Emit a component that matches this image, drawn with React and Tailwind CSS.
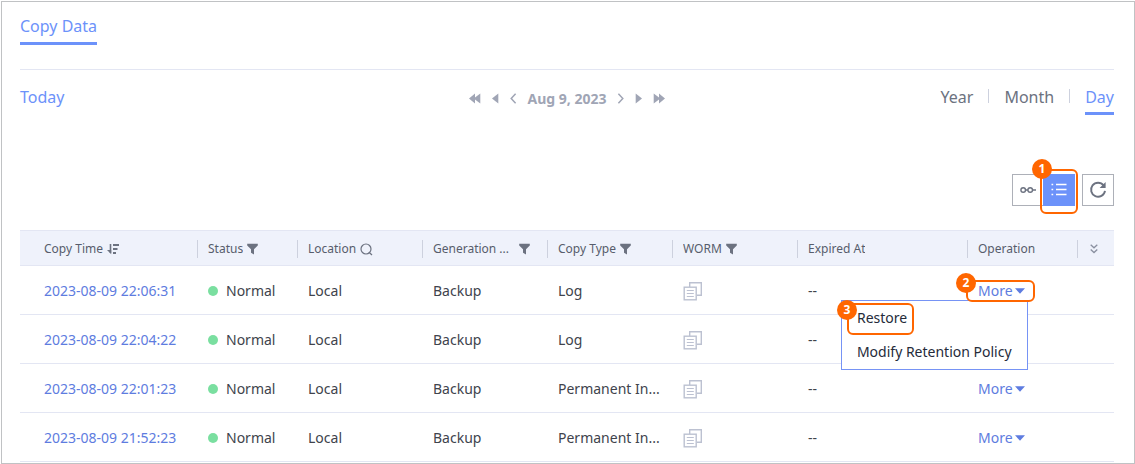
import React from "react";

const rows = [
  { time: "2023-08-09 22:06:31", type: "Log", actions: true, open: true },
  { time: "2023-08-09 22:04:22", type: "Log" },
  { time: "2023-08-09 22:01:23", type: "Permanent In...", actions: true },
  { time: "2023-08-09 21:52:23", type: "Permanent In...", actions: true },
];

function Filter() {
  return (
    <svg width="11" height="12" viewBox="0 0 11 12" className="shrink-0 fill-[#6c7280]" aria-hidden="true">
      <path d="M0.2 0.8H10.8V2.6L7 6.2V11.6L4 9.8V6.2L0.2 2.6Z" />
    </svg>
  );
}

function Sort() {
  return (
    <svg width="12" height="12" viewBox="0 0 12 12" className="shrink-0" fill="none" stroke="#6c7280" aria-hidden="true">
      <path d="M3.5 1V10" strokeWidth="1.6" />
      <path d="M0 7H4.2V11.2Z" fill="#6c7280" stroke="none" />
      <path d="M6 2H12M6 6H10.5M6 10H9" strokeWidth="1.9" />
    </svg>
  );
}

function Search() {
  return (
    <svg width="13" height="13" viewBox="0 0 13 13" className="shrink-0" fill="none" stroke="#6c7280" strokeWidth="1.2" aria-hidden="true">
      <circle cx="6" cy="6" r="5" />
      <path d="M9 9.2L12 12" />
    </svg>
  );
}

function Worm() {
  return (
    <svg width="20" height="20" viewBox="0 0 20 20" fill="none" stroke="#bcc1d1" role="img" aria-label="WORM">
      <path d="M6.7 6V1.7H18.3V14.3H14" strokeWidth="1.4" />
      <rect x="1.2" y="6.2" width="12" height="12.6" strokeWidth="1.4" />
      <path d="M3.8 9.5H10.8M3.8 12.5H10.8M3.8 15.5H10.8" strokeWidth="1.1" />
    </svg>
  );
}

function NavIcon({ kind, flip, label }) {
  const width = kind === "double" ? 12 : 7;
  return (
    <button type="button" aria-label={label} className="block">
      <svg
        width={width}
        height="11"
        viewBox={`0 0 ${width} 11`}
        fill="#a0a5b5"
        className={flip ? "rotate-180" : ""}
        aria-hidden="true"
      >
        {kind === "double" && <path d="M0 5.5L6 0.5V4.6L11.3 0.5V10.5L6 6.4V10.5Z" />}
        {kind === "single" && <path d="M0 5.5L6.3 0.5V10.5Z" />}
        {kind === "chevron" && <path d="M5.6 0.8L1.2 5.5L5.6 10.2" fill="none" stroke="#a0a5b5" strokeWidth="1.5" />}
      </svg>
    </button>
  );
}

function Badge({ children }) {
  return (
    <span className="flex size-5 items-center justify-center rounded-full bg-[#ff6600] text-[12px] leading-5 font-bold text-white">
      {children}
    </span>
  );
}

function Heading({ label, icon, first, spread }) {
  return (
    <th scope="col" className="p-0 text-left font-normal">
      <div
        className={`flex h-[18px] items-center gap-1 ${first ? "pl-6" : "border-l border-[#cdd1de] pl-[10px]"} ${
          spread ? "justify-between pr-[17px]" : ""
        }`}
      >
        <span className="truncate">{label}</span>
        {icon}
      </div>
    </th>
  );
}

function More({ open }) {
  return (
    <div className="relative w-fit">
      <button
        type="button"
        aria-haspopup="menu"
        aria-expanded={!!open}
        className="flex items-center gap-[2px] leading-[18px] text-[#5e7ce0]"
      >
        More
        <svg width="10" height="6" viewBox="0 0 10 6" fill="#5e7ce0" aria-hidden="true">
          <path d="M0 0.3H10L5 5.8Z" />
        </svg>
      </button>
      {open && (
        <>
          <div
            role="menu"
            className="absolute top-[18px] -right-[3px] z-10 border border-[#7693f5] bg-white text-[#252b3a]"
          >
            <div className="relative">
              <button type="button" role="menuitem" className="block h-[34px] w-full px-[15px] text-left whitespace-nowrap">
                Restore
              </button>
              <div className="pointer-events-none absolute top-[2px] left-[5px] h-8 w-[67px] rounded-md border-2 border-[#ff6600]">
                <div className="absolute -top-[5px] -left-[12px]">
                  <Badge>3</Badge>
                </div>
              </div>
            </div>
            <button type="button" role="menuitem" className="block h-[34px] w-full px-[15px] text-left whitespace-nowrap">
              Modify Retention Policy
            </button>
          </div>
          <div className="pointer-events-none absolute -top-[2px] -right-[10px] -bottom-[2px] -left-[12px] z-20 rounded-md border-2 border-[#ff6600]">
            <div className="absolute -top-[9px] -left-[12px]">
              <Badge>2</Badge>
            </div>
          </div>
        </>
      )}
    </div>
  );
}

export default function App() {
  return (
    <div className="flex min-h-screen flex-col bg-white pt-px pl-px font-['Noto_Sans',sans-serif] text-[14px] text-[#40434c]">
      <main className="grow border border-[#c0c2c4] pr-5 pl-[18px]">
        <nav className="flex h-[68px] items-start border-b border-[#e3e6f3] pt-3">
          <a
            href="#copy-data"
            aria-current="page"
            className="border-b-3 border-[#6c92fa] pb-1 text-[16px] leading-6 text-[#6c92fa]"
          >
            Copy Data
          </a>
        </nav>

        <div className="grid grid-cols-[1fr_auto_1fr] items-start pt-[15px]">
          <div>
            <button type="button" className="text-[16px] leading-6 text-[#6c92fa]">
              Today
            </button>
          </div>
          <div className="flex h-[27px] items-center gap-[11px]">
            <NavIcon kind="double" label="Previous year" />
            <NavIcon kind="single" label="Previous month" />
            <NavIcon kind="chevron" label="Previous day" />
            <span className="font-bold text-[#a0a5b5]">Aug 9, 2023</span>
            <NavIcon kind="chevron" flip label="Next day" />
            <NavIcon kind="single" flip label="Next month" />
            <NavIcon kind="double" flip label="Next year" />
          </div>
          <div className="flex items-start justify-end text-[16px] leading-6 text-[#6c7280]">
            <button type="button">Year</button>
            <span className="mx-[15px] mt-1 h-[14px] w-px bg-[#cdd1de]" />
            <button type="button">Month</button>
            <span className="mx-[15px] mt-1 h-[14px] w-px bg-[#cdd1de]" />
            <button type="button" aria-pressed="true" className="border-b-3 border-[#6c92fa] pb-[3px] text-[#6c92fa]">
              Day
            </button>
          </div>
        </div>

        <div className="flex justify-end pt-[59px]">
          <button
            type="button"
            aria-label="Timeline view"
            className="flex h-8 w-[31px] items-center justify-center border border-r-0 border-[#adb0b8]"
          >
            <svg width="16" height="8" viewBox="0 0 16 8" fill="none" stroke="#6c7280" strokeWidth="1.4" aria-hidden="true">
              <circle cx="3.2" cy="4" r="2.3" />
              <circle cx="10.2" cy="4" r="2.3" />
              <path d="M5.5 4H7.9M12.5 4H16" />
            </svg>
          </button>
          <div className="relative">
            <button
              type="button"
              aria-label="List view"
              aria-pressed="true"
              className="flex h-8 w-8 items-center justify-center bg-[#6c92fa]"
            >
              <svg width="16" height="14" viewBox="0 0 16 14" fill="none" stroke="#fff" strokeWidth="1.3" aria-hidden="true">
                <path d="M0.5 1.5H2.2M0.5 6.5H2.2M0.5 11.5H2.2M5 1.5H15.5M5 6.5H15.5M5 11.5H15.5" />
              </svg>
            </button>
            <div className="pointer-events-none absolute -top-[5px] -right-[3px] -bottom-[8px] -left-[3px] rounded-md border-2 border-[#ff6600]">
              <div className="absolute -top-[12px] -left-[10px]">
                <Badge>1</Badge>
              </div>
            </div>
          </div>
          <button
            type="button"
            aria-label="Refresh"
            className="ml-[7px] flex size-8 items-center justify-center border border-[#adb0b8]"
          >
            <svg width="18" height="18" viewBox="0 0 18 18" fill="none" stroke="#6c7280" aria-hidden="true">
              <path d="M14.6 4.4A7 7 0 1 0 16 9.8" strokeWidth="1.9" />
              <path d="M16.6 1V7H10.6Z" fill="#6c7280" stroke="none" />
            </svg>
          </button>
        </div>

        <table className="mt-6 w-full table-fixed border-separate border-spacing-0">
          <colgroup>
            <col className="w-[177px]" />
            <col className="w-[100px]" />
            <col className="w-[125px]" />
            <col className="w-[125px]" />
            <col className="w-[125px]" />
            <col className="w-[125px]" />
            <col className="w-[170px]" />
            <col className="w-[110px]" />
            <col className="w-[37px]" />
          </colgroup>
          <thead>
            <tr className="h-9 bg-[#eff2fb] text-[12px] text-[#575d6c] [&>th]:border-y [&>th]:border-[#e3e6f3] [&>th]:pt-[2px]">
              <Heading label="Copy Time" icon={<Sort />} first />
              <Heading label="Status" icon={<Filter />} />
              <Heading label="Location" icon={<Search />} />
              <Heading label="Generation ..." icon={<Filter />} spread />
              <Heading label="Copy Type" icon={<Filter />} />
              <Heading label="WORM" icon={<Filter />} />
              <Heading label="Expired At" />
              <Heading label="Operation" />
              <th scope="col" className="p-0">
                <div className="flex h-[18px] items-center border-l border-[#cdd1de] pl-3">
                  <button type="button" aria-label="Configure columns">
                    <svg width="8" height="10" viewBox="0 0 8 10" fill="none" stroke="#8a90a0" strokeWidth="1.3" aria-hidden="true">
                      <path d="M0.7 0.8L4 3.8L7.3 0.8M0.7 5.6L4 8.6L7.3 5.6" />
                    </svg>
                  </button>
                </div>
              </th>
            </tr>
          </thead>
          <tbody>
            {rows.map((row) => (
              <tr
                key={row.time}
                className="h-[49px] [&>td]:border-b [&>td]:border-[#e3e6f3] [&>td]:pt-px [&>td]:pr-0 [&>td]:pb-0 [&>td]:pl-[11px] [&>td]:whitespace-nowrap"
              >
                <td className="pl-6!">
                  <a href="#copy" className="text-[#5e7ce0]">
                    {row.time}
                  </a>
                </td>
                <td>
                  <span className="flex items-center gap-2">
                    <span className="size-[10px] rounded-full bg-[#7adfa0]" />
                    Normal
                  </span>
                </td>
                <td>Local</td>
                <td>Backup</td>
                <td>{row.type}</td>
                <td>
                  <Worm />
                </td>
                <td>--</td>
                <td>{row.actions && <More open={row.open} />}</td>
                <td />
              </tr>
            ))}
          </tbody>
        </table>
      </main>
    </div>
  );
}
